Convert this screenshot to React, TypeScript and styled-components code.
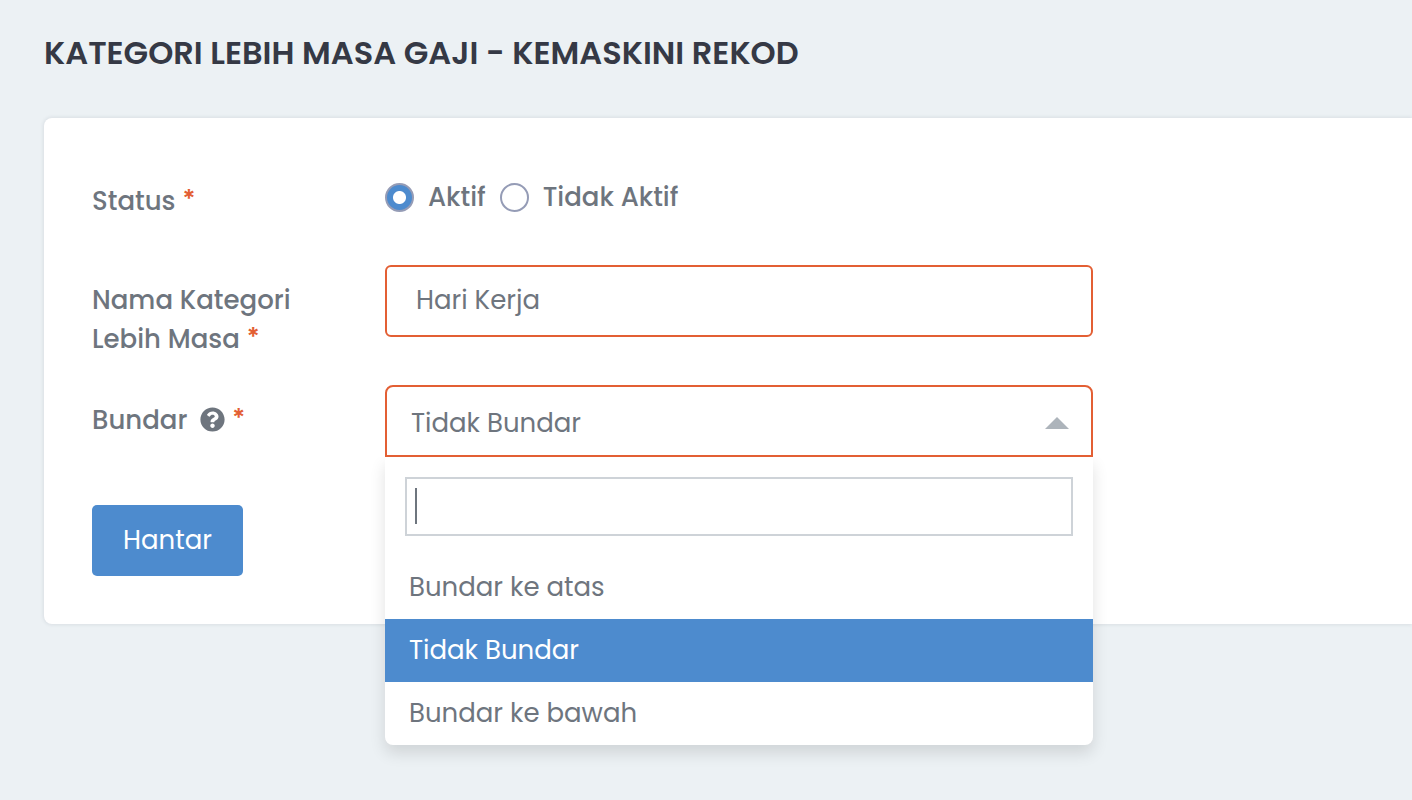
import React, { useState } from "react";
import styled, { createGlobalStyle } from "styled-components";
import { FaQuestionCircle } from "react-icons/fa";

const color = {
  page: "#ecf1f4",
  heading: "#353945",
  text: "#6e757e",
  accent: "#4d8bce",
  danger: "#e35f34",
  line: "#ced3d8",
  radio: "#959cb6",
  arrow: "#adb4bb",
};

const GlobalStyle = createGlobalStyle`
  *, *::before, *::after { box-sizing: border-box; }
  body {
    margin: 0;
    background: ${color.page};
    color: ${color.text};
    font: 400 26px/39px Poppins, Inter, sans-serif;
  }
  input, select, button { font: inherit; color: inherit; }
`;

const Page = styled.main`
  min-height: 100vh;
  padding: 32px 0 56px 44px;
`;

const Title = styled.h1`
  margin: 0 0 44px;
  color: ${color.heading};
  font-size: 32px;
  line-height: 42px;
  font-weight: 600;
  text-transform: uppercase;
`;

const Card = styled.form`
  padding: 48px;
  background: #fff;
  border-radius: 8px 0 0 8px;
  box-shadow: 0 0 4px rgba(40, 60, 80, 0.14);
`;

const Row = styled.div<{ $height?: number }>`
  display: grid;
  grid-template-columns: 293px minmax(0, 708px);
  align-items: start;
  min-height: ${({ $height }) => $height ?? 120}px;
`;

const Label = styled.label`
  padding: 16px 72px 0 0;
  font-weight: 500;
`;

const Star = styled.span`
  color: ${color.danger};
  font-family: Inter, sans-serif;
  font-size: 24px;
  line-height: 24px;
  font-weight: 700;
  vertical-align: 3px;
`;

const HelpIcon = styled(FaQuestionCircle)`
  width: 25px;
  height: 25px;
  margin: 0 0 0 6px;
  vertical-align: -3px;
`;

const RadioGroup = styled.div`
  display: flex;
  gap: 14px;
  padding-top: 12px;
`;

const RadioLabel = styled.label`
  display: flex;
  align-items: center;
  gap: 14px;
  font-weight: 500;
`;

const Radio = styled.input`
  appearance: none;
  width: 29px;
  height: 29px;
  margin: 0;
  border: 2px solid ${color.radio};
  border-radius: 50%;
  background: #fff;
  &:checked {
    background: radial-gradient(circle, #fff 6px, ${color.accent} 7px);
  }
`;

const TextInput = styled.input`
  width: 100%;
  height: 72px;
  padding: 0 29px 2px;
  border: 2px solid ${color.danger};
  border-radius: 6px;
  background: #fff;
  outline: none;
`;

const Dropdown = styled.div`
  position: relative;
`;

const Select = styled.select`
  display: block;
  appearance: none;
  width: 100%;
  height: 72px;
  padding: 4px 60px 0 24px;
  border: 2px solid ${color.danger};
  border-radius: 8px 8px 0 0;
  background: #fff;
  outline: none;
`;

const Arrow = styled.svg`
  position: absolute;
  top: 32px;
  right: 24px;
  width: 24px;
  height: 12px;
  fill: ${color.arrow};
  pointer-events: none;
`;

const Menu = styled.div`
  position: absolute;
  z-index: 2;
  top: 100%;
  left: 0;
  right: 0;
  background: #fff;
  border-radius: 0 0 8px 8px;
  box-shadow: 0 8px 16px rgba(0, 0, 0, 0.12);
  clip-path: inset(0 -32px -32px -32px);
`;

const SearchField = styled.div`
  display: flex;
  align-items: center;
  height: 59px;
  margin: 20px;
  padding: 0 8px 2px;
  border: 2px solid ${color.line};
`;

const Caret = styled.span`
  width: 2px;
  height: 36px;
  background: ${color.text};
`;

const SearchInput = styled.input`
  flex: 1;
  min-width: 0;
  height: 100%;
  padding: 0;
  border: 0;
  outline: none;
  background: transparent;
`;

const Options = styled.div`
  display: flex;
  flex-direction: column;
`;

const Option = styled.button<{ $active: boolean }>`
  height: 63px;
  padding: 0 24px;
  border: 0;
  text-align: left;
  background: ${({ $active }) => ($active ? color.accent : "transparent")};
  color: ${({ $active }) => ($active ? "#fff" : color.text)};
  &:last-child {
    border-radius: 0 0 8px 8px;
  }
`;

const Submit = styled.button`
  display: block;
  height: 71px;
  padding: 0 31px;
  border: 0;
  border-radius: 5px;
  background: ${color.accent};
  color: #fff;
`;

const choices = ["Bundar ke atas", "Tidak Bundar", "Bundar ke bawah"];

export default function App() {
  const [status, setStatus] = useState("Aktif");
  const [rounding, setRounding] = useState("Tidak Bundar");
  const [open, setOpen] = useState(true);
  const [query, setQuery] = useState("");

  return (
    <>
      <GlobalStyle />
      <Page>
        <Title>Kategori Lebih Masa Gaji - Kemaskini Rekod</Title>
        <Card onSubmit={(e) => e.preventDefault()}>
          <Row $height={99}>
            <Label as="div" id="status-label">
              Status <Star>*</Star>
            </Label>
            <RadioGroup role="radiogroup" aria-labelledby="status-label">
              {["Aktif", "Tidak Aktif"].map((value) => (
                <RadioLabel key={value}>
                  <Radio
                    type="radio"
                    name="status"
                    value={value}
                    checked={status === value}
                    onChange={() => setStatus(value)}
                  />
                  {value}
                </RadioLabel>
              ))}
            </RadioGroup>
          </Row>
          <Row>
            <Label htmlFor="name">
              Nama Kategori Lebih Masa <Star>*</Star>
            </Label>
            <TextInput id="name" type="text" defaultValue="Hari Kerja" />
          </Row>
          <Row>
            <Label htmlFor="rounding">
              Bundar <HelpIcon aria-hidden /> <Star>*</Star>
            </Label>
            <Dropdown>
              <Select
                id="rounding"
                value={rounding}
                onChange={(e) => setRounding(e.target.value)}
                onMouseDown={(e) => {
                  e.preventDefault();
                  setOpen(!open);
                }}
              >
                {choices.map((c) => (
                  <option key={c}>{c}</option>
                ))}
              </Select>
              <Arrow viewBox="0 0 24 12" aria-hidden>
                <path d="M0 12 12 0l12 12z" />
              </Arrow>
              {open && (
                <Menu>
                  <SearchField>
                    {query === "" && <Caret />}
                    <SearchInput
                      type="text"
                      aria-label="Cari"
                      value={query}
                      onChange={(e) => setQuery(e.target.value)}
                    />
                  </SearchField>
                  <Options role="listbox" aria-label="Bundar">
                    {choices
                      .filter((c) => c.toLowerCase().includes(query.toLowerCase()))
                      .map((c) => (
                        <Option
                          key={c}
                          type="button"
                          role="option"
                          aria-selected={c === rounding}
                          $active={c === rounding}
                          onClick={() => {
                            setRounding(c);
                            setOpen(false);
                          }}
                        >
                          {c}
                        </Option>
                      ))}
                  </Options>
                </Menu>
              )}
            </Dropdown>
          </Row>
          <Submit type="submit">Hantar</Submit>
        </Card>
      </Page>
    </>
  );
}
